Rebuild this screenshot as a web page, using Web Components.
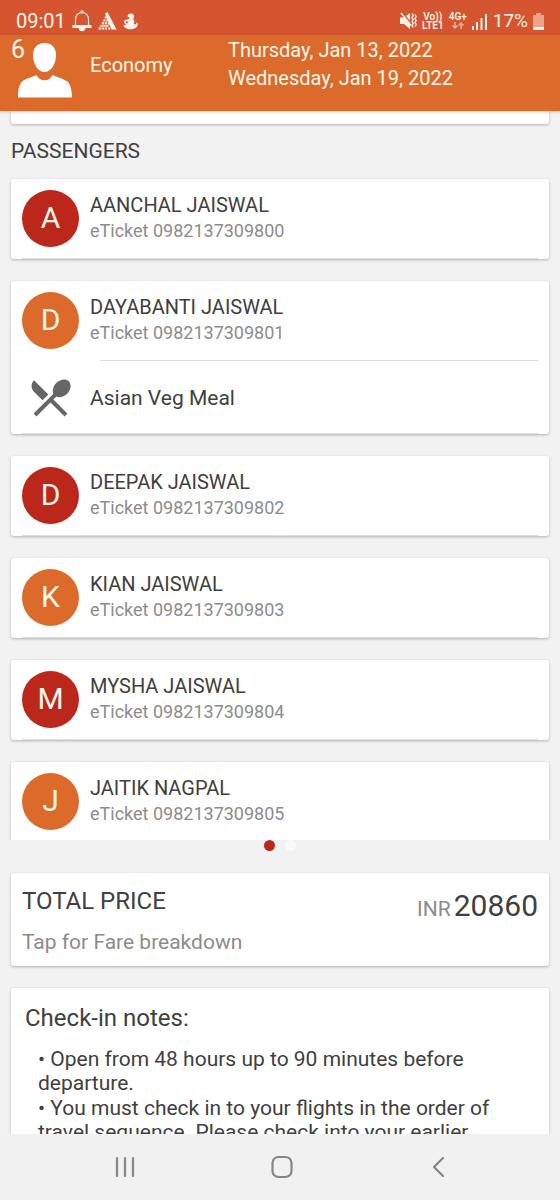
<!DOCTYPE html>
<html lang="en">
<head>
<meta charset="utf-8">
<meta name="viewport" content="width=device-width, initial-scale=1">
<title>Booking details</title>
<style>
  body {
    margin: 0;
    background: #f2f2f2;
    color: #404040;
    font-family: Roboto, "Liberation Sans", sans-serif;
    font-size: 20px;
    --red: #bb271b;
    --orange: #dc6b2b;
    --muted: #8c8c8c;
    --shadow: 0 1px 3px rgba(0, 0, 0, .28);
  }
</style>
</head>
<body>
<booking-app></booking-app>

<template id="status-bar">
  <style>
    :host { display: flex; align-items: center; box-sizing: border-box; height: 35px; padding: 7px 16px 0 16px; background: #d4552f; color: #fff3ea; font-size: 20px; line-height: 28px; }
    svg { display: block; fill: currentColor; }
    .left, .right { display: flex; align-items: center; }
    .left { gap: 6px; flex: 1; }
    .net { font-size: 10px; line-height: 9px; font-weight: 600; text-align: center; }
    .net span { display: block; }
    .right { gap: 5px; font-size: 19px; }
    .net svg { margin: 0 auto; opacity: .6; }
  </style>
  <div class="left">
    <time>09:01</time>
    <svg width="20" height="23" viewBox="0 0 20 23" aria-hidden="true"><path d="M3.500 15V9a6.500 6.500 0 0 1 13 0v6" fill="none" stroke="currentColor" stroke-width="1.200"/><circle cx="10" cy="1.800" r="1.200" fill="none" stroke="currentColor"/><path d="M.5 15h19v3h-6.200a3.300 3.300 0 0 1-6.600 0H.5z"/></svg>
    <svg width="19" height="18" viewBox="0 0 18 18" aria-hidden="true"><path d="M6.500 1.500 9 0l9 17.500h-5z"/><path d="M6.300 4.500h2.100v2.100H6.300zM4.800 7.500h2.100v2.100H4.800zM7.800 7.500h2.100v2.100H7.800zM3.300 10.300h2.100v2.100H3.300zM6.300 10.300h2.100v2.100H6.300zM9.300 10.300h2.100v2.100H9.300zM1.800 13h2.100v2.100H1.800zM4.800 13h2.100v2.100H4.800zM7.800 13h2.100v2.100H7.800zM.2 15.500h2.100v2.100H.2zM3.300 15.500h2.100v2.100H3.300zM6.300 15.500h2.100v2.100H6.300zM9.600 15.500h2.100v2.100H9.600z"/></svg>
    <svg width="15" height="17" viewBox="0 0 15 17" aria-hidden="true"><path d="M4.300 3.600C4.800 1.200 6.500.2 8.300.4c2 .2 3 1.600 2.700 3.300-.2 1.200-1 1.900-.6 2.700 1.400 1.200 1.200 3 .2 4.600 1.500.6 2.700.2 2.700-1.600l1.500.8c.3 3.500-2.500 6-7 6S.8 14.500.3 11.700c1.500.8 2.500.5 2.700-.3C1 10.300.5 8.800 1.300 7.700 2.300 6.500 4.500 6.900 6.300 5.500L6 4z"/><circle cx="3.800" cy="9.300" r="1.100" fill="#d4552f"/></svg>
  </div>
  <div class="right">
    <svg width="17" height="18" viewBox="0 0 17 18" aria-hidden="true"><path d="M0 5.500h4L10 1v16l-6-5H0z"/><path d="M2 0l9 11" stroke="#d4552f" stroke-width="1.300"/><path d="M1 1l10 12.500" stroke="currentColor" stroke-width="1.500"/><path d="m12 1.500 1.200 2-1.200 2 1.200 2-1.200 2 1.200 2-1.200 2 1.200 2M15 2.500l1.200 2-1.200 2 1.200 2-1.200 2 1.200 2-1.200 2" fill="none" stroke="currentColor" stroke-width="1.400"/></svg>
    <div class="net"><span>Vo))</span><span>LTE1</span></div>
    <div class="net"><span>4G+</span><svg width="12" height="9" viewBox="0 0 12 9" aria-hidden="true"><path d="M3 1v6M.5 4.500 3 7l2.500-2.500M9 8V2M6.500 4.500 9 2l2.500 2.500" fill="none" stroke="currentColor" stroke-width="1.400"/></svg></div>
    <svg width="16" height="17" viewBox="0 0 16 17" aria-hidden="true"><path d="M0 13h2v4H0zM4 9h2v8H4zM8.500 5h2v12h-2zM13 1h2v16h-2z"/></svg>
    <span>17%</span>
    <svg width="11" height="17" viewBox="0 0 11 17" aria-hidden="true"><path d="M3 0h5v2h3v12H0V2h3z" opacity=".5"/><path d="M0 14h11v3H0z"/></svg>
  </div>
</template>

<template id="trip-header">
  <style>
    :host { display: flex; align-items: flex-start; box-sizing: border-box; height: 76px; padding: 0 17px; background: var(--orange); color: #fff6ec; position: relative; z-index: 1; box-shadow: 0 1px 3px rgba(0,0,0,.2); }
    .people { position: relative; width: 73px; padding-top: 8px; }
    svg { display: block; fill: #fff; }
    b { position: absolute; left: -6px; top: 0; font-weight: 400; font-size: 25px; line-height: 30px; }
    p { margin: 0; }
    .cabin { width: 138px; line-height: 60px; }
    .dates { flex: 1; line-height: 28px; padding-top: 1px; }
    time { display: block; }
  </style>
  <div class="people">
    <svg width="56" height="55" viewBox="0 0 56 55" aria-hidden="true"><path d="M27.500 0C35 0 39 5 39 12c0 9-5 17-11.500 17S16 21 16 12C16 5 20 0 27.500 0z"/><path d="M1 54.500c0-6 .5-11 3-15 2-3 10-5 15.500-7.500 3 7 13 7 16 0 5.500 2.500 13.500 4.500 16 7.500 2.500 4 3.500 9 3.500 15z"/></svg>
    <b>6</b>
  </div>
  <p class="cabin">Economy</p>
  <p class="dates"><time datetime="2022-01-13">Thursday, Jan 13, 2022</time><time datetime="2022-01-19">Wednesday, Jan 19, 2022</time></p>
</template>

<template id="passenger-card">
  <style>
    :host { display: block; background: #fff; border-radius: 3px; box-shadow: var(--shadow); }
    .row { display: grid; grid-template-columns: 57px 1fr; column-gap: 11px; padding: 11px 11px 12px; }
    .avatar { width: 57px; height: 57px; border-radius: 50%; background: var(--tone); color: #fff6ec; font-size: 30px; line-height: 56px; text-align: center; }
    h2, p { margin: 0; font-weight: 400; line-height: 26px; }
    h2 { font-size: 20px; padding-top: 2px; }
    p { font-size: 18px; color: var(--muted); }
    .end { height: 1px; margin: -1px 11px 0; background: #dedede; }
  </style>
  <div class="row">
    <div class="avatar" aria-hidden="true"></div>
    <div><h2></h2><p></p></div>
  </div>
  <slot></slot>
  <div class="end"></div>
</template>

<template id="meal-row">
  <style>
    :host { display: block; margin-right: 11px; font-size: 21px; }
    hr { height: 1px; border: 0; margin: -1px 0 0 89px; background: #dedede; }
    .row { display: flex; align-items: center; height: 73px; padding-left: 15px; }
    svg { display: block; width: 49px; height: 49px; margin-right: 15px; fill: #666; }
  </style>
  <hr>
  <div class="row">
    <svg viewBox="0 0 24 24" aria-hidden="true"><path d="M8.100 13.340l2.830-2.830L3.910 3.500c-1.560 1.560-1.560 4.090 0 5.660l4.190 4.180zm6.780-1.810c1.530.71 3.680.21 5.270-1.380 1.910-1.910 2.280-4.650.81-6.120-1.460-1.460-4.200-1.100-6.120.81-1.590 1.590-2.090 3.740-1.380 5.270L3.700 19.870l1.410 1.410L12 14.410l6.880 6.880 1.410-1.410L13.410 13l1.470-1.470z"/></svg>
    <slot></slot>
  </div>
</template>

<template id="price-card">
  <style>
    :host { display: block; }
    button { display: flex; justify-content: space-between; width: 100%; border: 0; margin: 0; padding: 11px; border-radius: 3px; background: #fff; box-shadow: var(--shadow); font: inherit; color: inherit; text-align: left; }
    span { display: block; }
    .title { font-size: 24px; line-height: 35px; }
    .hint { font-size: 21px; line-height: 24px; padding: 11px 0 1px; color: var(--muted); }
    .amount { font-size: 30px; line-height: 43px; }
    small { font-size: 21px; color: var(--muted); margin-right: 3px; }
  </style>
  <button type="button">
    <span><span class="title">TOTAL PRICE</span><span class="hint">Tap for Fare breakdown</span></span>
    <span class="amount"><small>INR</small>20860</span>
  </button>
</template>

<template id="checkin-notes">
  <style>
    :host { display: block; box-sizing: border-box; overflow: hidden; background: #fff; border-radius: 3px 3px 0 0; padding: 14px 29px 0 14px; box-shadow: var(--shadow); }
    h2 { margin: 0 0 12px; font-size: 24px; font-weight: 400; line-height: 33px; }
    ul { list-style: none; margin: 0; padding: 0 0 0 13px; font-size: 21px; }
    li { line-height: 24px; margin-bottom: 1px; }
  </style>
  <h2>Check-in notes:</h2>
  <ul>
    <li>• Open from 48 hours up to 90 minutes before departure.</li>
    <li>• You must check in to your flights in the order of travel sequence. Please check into your earlier</li>
  </ul>
</template>

<template id="nav-bar">
  <style>
    :host { display: grid; grid-template-columns: repeat(3, 1fr); height: 66px; padding: 0 44px 0 48px; background: #f1f1f1; position: relative; z-index: 1; }
    button { display: grid; place-items: center; border: 0; padding: 0; background: none; color: #868686; }
    svg { display: block; fill: none; stroke: currentColor; stroke-width: 2.200; stroke-linecap: round; stroke-linejoin: round; }
  </style>
  <button type="button" aria-label="Recent apps"><svg width="22" height="22" viewBox="0 0 22 22"><path d="M2 2v18M10 2v18M18 2v18"/></svg></button>
  <button type="button" aria-label="Home"><svg width="22" height="24" viewBox="0 0 22 24"><rect x="1.500" y="2" width="19" height="20" rx="6"/></svg></button>
  <button type="button" aria-label="Back"><svg width="14" height="22" viewBox="0 0 14 22"><path d="M12 2 3 11l9 9"/></svg></button>
</template>

<template id="booking-app">
  <style>
    :host { display: flex; flex-direction: column; height: 100vh; overflow: hidden; }
    main { flex: 1; min-height: 0; display: flex; flex-direction: column; }
    .page { flex: 1; min-height: 0; overflow: hidden; padding: 0 11px; }
    .previous { height: 13px; background: #fff; border-radius: 0 0 3px 3px; box-shadow: var(--shadow); }
    h1 { margin: 14px 0 15px; font-size: 21px; font-weight: 400; line-height: 26px; }
    .list { display: flex; flex-direction: column; gap: 22px; }
    .dots { display: flex; justify-content: center; gap: 10px; height: 11px; margin: 0 0 22px; }
    .dots i { width: 11px; height: 11px; border-radius: 50%; background: #fafafa; }
    .dots .on { background: var(--red); }
    price-card { margin: 0 11px 22px; }
    checkin-notes { flex: 0 0 146px; margin: 0 11px; }
    passenger-card { --tone: var(--red); }
    passenger-card:nth-child(even) { --tone: var(--orange); }
  </style>
  <status-bar></status-bar>
  <trip-header></trip-header>
  <main>
    <section class="page">
      <div class="previous"></div>
      <h1>PASSENGERS</h1>
      <div class="list">
        <passenger-card name="AANCHAL JAISWAL" ticket="0982137309800"></passenger-card>
        <passenger-card name="DAYABANTI JAISWAL" ticket="0982137309801"><meal-row>Asian Veg Meal</meal-row></passenger-card>
        <passenger-card name="DEEPAK JAISWAL" ticket="0982137309802"></passenger-card>
        <passenger-card name="KIAN JAISWAL" ticket="0982137309803"></passenger-card>
        <passenger-card name="MYSHA JAISWAL" ticket="0982137309804"></passenger-card>
        <passenger-card name="JAITIK NAGPAL" ticket="0982137309805"></passenger-card>
      </div>
    </section>
    <div class="dots" aria-hidden="true"><i class="on"></i><i></i></div>
    <price-card></price-card>
    <checkin-notes></checkin-notes>
  </main>
  <nav-bar></nav-bar>
</template>

<script>
  class TemplateElement extends HTMLElement {
    constructor() {
      super();
      const template = document.getElementById(this.localName);
      this.attachShadow({ mode: "open" }).append(template.content.cloneNode(true));
    }
  }

  class PassengerCard extends TemplateElement {
    connectedCallback() {
      const name = this.getAttribute("name");
      const root = this.shadowRoot;
      root.querySelector(".avatar").textContent = name[0];
      root.querySelector("h2").textContent = name;
      root.querySelector("p").textContent = "eTicket " + this.getAttribute("ticket");
    }
  }

  customElements.define("passenger-card", PassengerCard);
  for (const tag of ["status-bar", "trip-header", "meal-row", "price-card", "checkin-notes", "nav-bar", "booking-app"]) {
    customElements.define(tag, class extends TemplateElement {});
  }
</script>
</body>
</html>
